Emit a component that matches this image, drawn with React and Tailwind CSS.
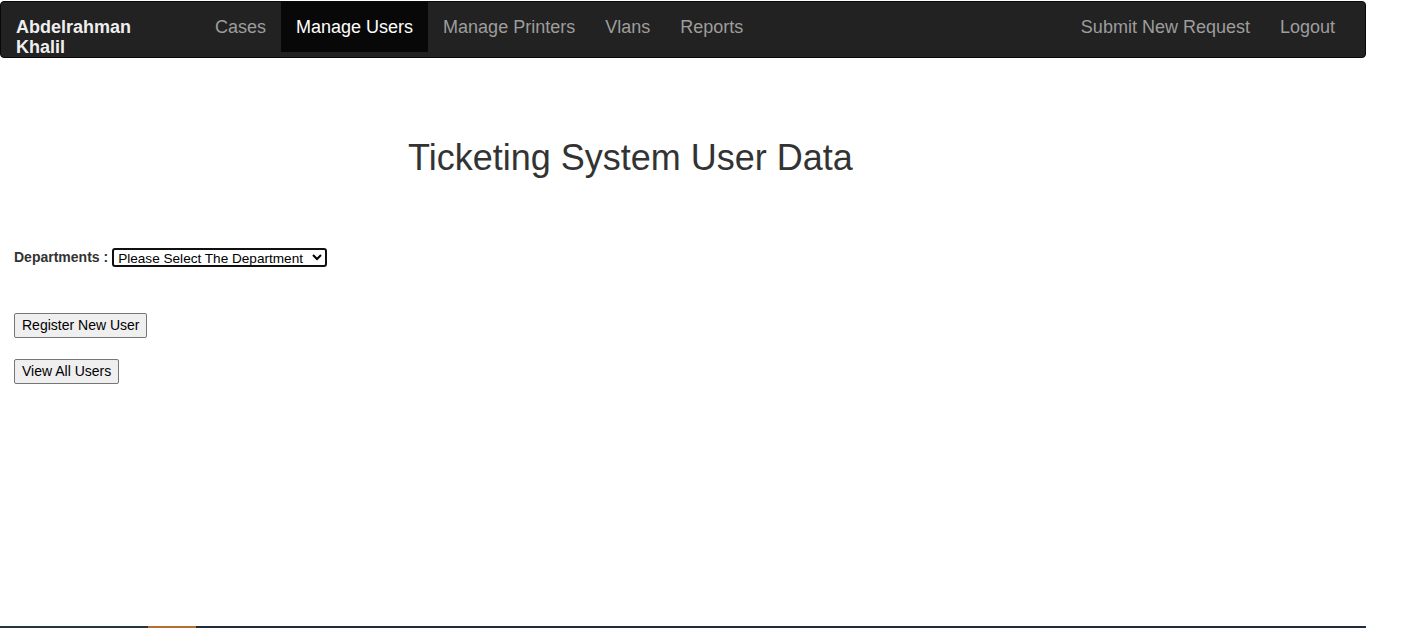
import React from "react";

const navLinks = [
  { label: "Cases" },
  { label: "Manage Users", active: true },
  { label: "Manage Printers" },
  { label: "Vlans" },
  { label: "Reports" },
];

const rightLinks = ["Submit New Request", "Logout"];

export default function App() {
  return (
    <div
      className="w-[1366px] h-[628px] flex flex-col bg-white text-[#333]"
      style={{ fontFamily: '"Liberation Sans", Arial, sans-serif' }}
    >
      <nav className="mt-[1px] h-[57px] flex items-start justify-between bg-[#222] border border-[#080808] rounded-[4px]">
        <div className="flex items-start">
          <a className="w-[199px] pl-[15px] pt-[15px] text-[18px] leading-[20px] font-bold text-[#eee]">
            Abdelrahman
            <br />
            Khalil
          </a>
          <ul className="flex">
            {navLinks.map((link) => (
              <li key={link.label}>
                <a
                  className={`block px-[15px] py-[15px] text-[18px] leading-[20px] ${
                    link.active ? "bg-[#080808] text-white" : "text-[#9d9d9d]"
                  }`}
                >
                  {link.label}
                </a>
              </li>
            ))}
          </ul>
        </div>
        <ul className="flex mr-[15px]">
          {rightLinks.map((label) => (
            <li key={label}>
              <a className="block px-[15px] py-[15px] text-[18px] leading-[20px] text-[#9d9d9d]">
                {label}
              </a>
            </li>
          ))}
        </ul>
      </nav>

      <main className="flex-1 px-[14px]">
        <h1 className="mt-[80px] pl-[394px] text-[36px] leading-[40px] text-[#333]">
          Ticketing System User Data
        </h1>

        <div className="mt-[69px] flex items-center gap-[4px]">
          <label className="text-[14px] font-bold text-[#333]">Departments :</label>
          <select className="h-[19px] w-[215px] py-0 text-[13.6px] leading-[15px] text-black border-2 border-[#101010] rounded-[3px] bg-white">
            <option>Please Select The Department</option>
          </select>
        </div>

        <div className="mt-[45px] flex flex-col items-start gap-[21px]">
          <button className="h-[25px] px-[7px] text-[14px] text-black bg-[#efefef] border border-[#767676] rounded-[2px]">
            Register New User
          </button>
          <button className="h-[25px] px-[7px] text-[14px] text-black bg-[#efefef] border border-[#767676] rounded-[2px]">
            View All Users
          </button>
        </div>
      </main>

      <div className="h-[2px] flex">
        <div className="w-[148px] bg-[#22373e]" />
        <div className="w-[48px] bg-[#b5702f]" />
        <div className="flex-1 bg-[#1f2d3a]" />
      </div>
    </div>
  );
}
